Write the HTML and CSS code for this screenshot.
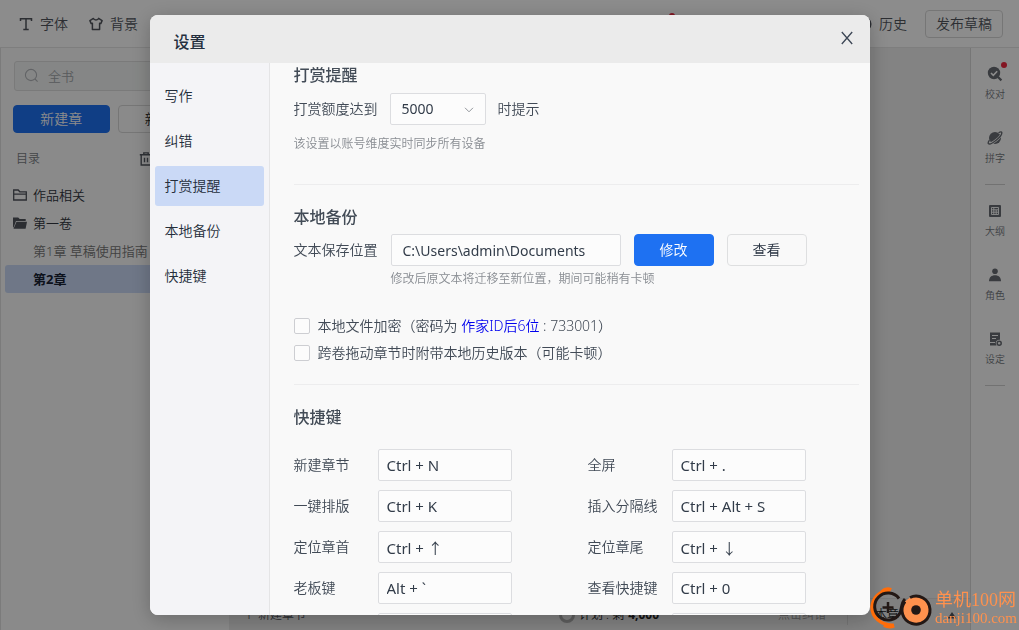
FILE: index.html
```html
<!DOCTYPE html>
<html lang="zh-CN">
<head>
<meta charset="utf-8">
<title>设置</title>
<meta name="viewport" content="width=device-width, initial-scale=1">
<link rel="stylesheet" href="styles.css">
</head>
<body>
<div class="app">
  <header class="topbar">
    <button class="tool" type="button">
      <svg width="14" height="14" viewBox="0 0 14 14" fill="none" stroke="currentColor" stroke-width="1.5"><path d="M1.500 4V1.700h11V4M7 1.700v10.500M4.300 12.400h5.400"/></svg>
      字体
    </button>
    <button class="tool" type="button">
      <svg width="14" height="14" viewBox="0 0 14 14" fill="none" stroke="currentColor" stroke-width="1.5" stroke-linejoin="round"><path d="M4.400 1.400.9 3.600l1.300 3 1.200-.4v6.400h7.200V6.200l1.200.4 1.300-3L9.600 1.400C9 3.400 5 3.400 4.400 1.400Z"/></svg>
      背景
    </button>
    <span class="topbar-mid"><i class="red-dot"></i></span>
    <button class="tool history" type="button">
      <svg width="14" height="14" viewBox="0 0 14 14" fill="none" stroke="currentColor" stroke-width="1.5"><circle cx="7" cy="7" r="5.8"/><path d="M7 3.5V7l2.3 1.5"/></svg>
      历史
    </button>
    <button class="publish" type="button">发布草稿</button>
  </header>
  <div class="workspace">
    <aside class="catalog">
      <label class="search">
        <svg width="16" height="16" viewBox="0 0 16 16" fill="none" stroke="currentColor" stroke-width="1.1"><circle cx="7" cy="7" r="5.6"/><path d="m11 11 2.6 2.6"/></svg>
        <input type="text" placeholder="全书" aria-label="搜索全书">
      </label>
      <div class="create">
        <button class="create-btn main" type="button">新建章</button>
        <button class="create-btn" type="button">新建卷</button>
      </div>
      <div class="catalog-head">
        <span>目录</span>
        <svg width="14" height="14" viewBox="0 0 14 14" fill="none" stroke="currentColor" stroke-width="1.4"><path d="M.8 2.8h12.4M4.8 2.5V.9h4.4v1.6M2.2 3v10h9.6V3M5.5 5.8v4.4M8.5 5.8v4.4"/></svg>
      </div>
      <ul class="tree">
        <li class="volume">
          <svg width="14" height="12" viewBox="0 0 14 12" fill="none" stroke="currentColor" stroke-width="1.3"><path d="M.7 11V1h4.5l1.6 1.800h6.500V11ZM.7 5.200h12.600"/></svg>
          作品相关
        </li>
        <li class="volume">
          <svg width="14" height="12" viewBox="0 0 14 12" fill="currentColor"><path d="M0 11V.4h5.200l1.500 1.700h6V4H3L1.200 9 0 11Z"/><path d="M3.500 4.700H14L12.600 11.800H.5Z"/></svg>
          第一卷
        </li>
        <li class="chapter">第1章 草稿使用指南</li>
        <li class="chapter current">第2章</li>
      </ul>
    </aside>
    <main class="editor">
      <div class="page"></div>
      <footer class="status">
        <button class="status-new" type="button">＋ 新建章节</button>
        <span class="plan"><i class="ring"></i>计划 : 剩 <b>4,000</b></span>
        <span class="fix">点击纠错</span>
        <span class="words">本章</span>
        <svg class="up" width="10" height="8" viewBox="0 0 10 8" fill="currentColor"><path d="M5 1 9.500 7.500h-9Z"/></svg>
      </footer>
    </main>
    <nav class="rail">
      <a class="rail-item" href="#proof">
        <svg width="16" height="16" viewBox="0 0 16 16"><circle cx="7" cy="7" r="6.2" fill="currentColor"/><path d="m11 11 3.4 3.4" stroke="currentColor" stroke-width="2.2"/><path d="m4 7 2.3 2.3 3.9-4" fill="none" stroke="#fff" stroke-width="1.6"/></svg>
        校对<i class="red-dot"></i>
      </a>
      <a class="rail-item short" href="#spell">
        <svg width="16" height="16" viewBox="0 0 16 16"><circle cx="8" cy="8" r="6" fill="currentColor"/><path d="M11.500 2.800c2-1.200 3.200-1.200 3.300-.2.200 1.600-2.200 4.800-5.400 7.400C6.200 12.700 2.600 14.600 1.500 13.700c-.7-.6-.2-1.900 1-3.500" fill="none" stroke="#fff" stroke-width="2.600"/><path d="M11.500 2.800c2-1.200 3.200-1.200 3.300-.2.200 1.600-2.200 4.800-5.400 7.400C6.200 12.700 2.600 14.600 1.500 13.700c-.7-.6-.2-1.900 1-3.500" fill="none" stroke="currentColor" stroke-width="1.400"/></svg>
        拼字
      </a>
      <a class="rail-item ruled" href="#outline">
        <svg width="16" height="16" viewBox="0 0 16 16"><rect x="2" y="2" width="12" height="12" rx="1" fill="currentColor"/><path d="M4.500 4.500h7v7h-7ZM6.800 4.500v7M4.500 6.800h7M4.500 9.200h7M9.200 6.800v4.700" fill="none" stroke="#fff" stroke-width=".9"/></svg>
        大纲
      </a>
      <a class="rail-item" href="#roles">
        <svg width="16" height="16" viewBox="0 0 16 16" fill="currentColor"><circle cx="8" cy="4.200" r="2.800"/><path d="M2 14.200c0-3.800 2.500-5.900 6-5.900s6 2.100 6 5.900Z"/></svg>
        角色
      </a>
      <a class="rail-item short" href="#setting">
        <svg width="16" height="16" viewBox="0 0 16 16"><path d="M3 1.500h10v7.300a3.500 3.500 0 0 0-3.500 5.700H3Z" fill="currentColor"/><path d="M5 4.500h6M5 7.500h4M3 11.500h5" stroke="#fff" stroke-width="1"/><circle cx="12.200" cy="12.200" r="2" fill="none" stroke="currentColor" stroke-width="1.500"/></svg>
        设定
      </a>
      <hr class="rail-end">
    </nav>
  </div>
</div>

<div class="overlay">
  <section class="modal" role="dialog" aria-labelledby="modal-title">
    <header class="modal-head">
      <h1 id="modal-title">设置</h1>
      <button class="close" type="button" aria-label="关闭">
        <svg width="14" height="14" viewBox="0 0 14 14" fill="none" stroke="currentColor" stroke-width="1.300"><path d="m1.800 1 10.400 12M12.200 1 1.800 13"/></svg>
      </button>
    </header>
    <div class="modal-body">
      <nav class="tabs">
        <a href="#write">写作</a>
        <a href="#correct">纠错</a>
        <a class="active" href="#reward">打赏提醒</a>
        <a href="#backup">本地备份</a>
        <a href="#keys">快捷键</a>
      </nav>
      <div class="panel">
        <section class="group reward" id="reward">
          <h2>打赏提醒</h2>
          <div class="row">
            <label for="amount">打赏额度达到</label>
            <span class="select">
              <select id="amount"><option>5000</option></select>
              <svg width="10" height="6" viewBox="0 0 10 6" fill="none" stroke="currentColor"><path d="m1 .8 4 4 4-4"/></svg>
            </span>
            <span>时提示</span>
          </div>
          <p class="hint">该设置以账号维度实时同步所有设备</p>
        </section>
        <section class="group backup" id="backup">
          <h2>本地备份</h2>
          <div class="row">
            <label for="path">文本保存位置</label>
            <input class="field path" id="path" type="text" value="C:\Users\admin\Documents">
            <button class="btn primary" type="button">修改</button>
            <button class="btn" type="button">查看</button>
          </div>
          <p class="hint indent">修改后原文本将迁移至新位置，期间可能稍有卡顿</p>
          <div class="checks">
            <label class="check"><input type="checkbox"><span>本地文件加密（密码为 <a href="#id">作家ID后6位</a> : 733001）</span></label>
            <label class="check"><input type="checkbox"><span>跨卷拖动章节时附带本地历史版本（可能卡顿）</span></label>
          </div>
        </section>
        <section class="group" id="keys">
          <h2>快捷键</h2>
          <div class="keys">
            <div class="key"><label for="k1">新建章节</label><input class="field" id="k1" value="Ctrl + N"></div>
            <div class="key"><label for="k2">全屏</label><input class="field" id="k2" value="Ctrl + ."></div>
            <div class="key"><label for="k3">一键排版</label><input class="field" id="k3" value="Ctrl + K"></div>
            <div class="key"><label for="k4">插入分隔线</label><input class="field" id="k4" value="Ctrl + Alt + S"></div>
            <div class="key"><label for="k5">定位章首</label><input class="field" id="k5" value="Ctrl + ↑"></div>
            <div class="key"><label for="k6">定位章尾</label><input class="field" id="k6" value="Ctrl + ↓"></div>
            <div class="key"><label for="k7">老板键</label><input class="field" id="k7" value="Alt + `"></div>
            <div class="key"><label for="k8">查看快捷键</label><input class="field" id="k8" value="Ctrl + 0"></div>
            <div class="key"><span></span><input class="field" aria-label="快捷键"></div>
            <div class="key"><span></span><input class="field" aria-label="快捷键"></div>
          </div>
        </section>
      </div>
    </div>
  </section>
</div>

<div class="brand">
  <svg width="64" height="42" viewBox="0 0 64 42" fill="none"><path d="M21 3.500C10 4 4 11 3 20c0 10 8 18 22 18.500" stroke="#ff6d0a" stroke-width="3.500"/><path d="M13 5c3-3 6-3.500 9-2M15 38c4 2 7 2 10 .500" stroke="#ff6d0a" stroke-width="4"/><path d="M30 11.500A13.500 13.500 0 1 0 31 26c2-5 1-10 5-14" stroke="#231815" stroke-width="3"/><path d="M19 15v11M13.500 20.500h11" stroke="#231815" stroke-width="2.500"/><path d="M41 10.500a14 14 0 1 1-5 4" fill="#ff914d" stroke="#231815" stroke-width="3"/><circle cx="47" cy="23" r="4.800" fill="#231815"/></svg>
  <div class="brand-text"><span class="brand-name">单机100网</span><span class="brand-site">danji100.com</span></div>
</div>
</body>
</html>
```
FILE: styles.css
```css
* { box-sizing: border-box; }
html, body { height: 100%; }
body {
  margin: 0;
  overflow: hidden;
  font: 350 14px/20px "Noto Sans", "Noto Sans CJK SC", sans-serif;
  color: #414a56;
  background: #fff;
}
button, input, select { font: inherit; color: inherit; }
button { padding: 0; border: 0; background: none; }
h1, h2, p, ul { margin: 0; padding: 0; }
ul { list-style: none; }
a { color: inherit; text-decoration: none; }
svg { flex: none; display: block; }

.app { height: 100%; display: flex; flex-direction: column; }
.topbar {
  flex: none;
  height: 48px;
  padding: 0 16px 0 19px;
  display: flex;
  align-items: center;
  gap: 18px;
  border-bottom: 1px solid #e6e6e6;
}
.tool { display: flex; align-items: center; gap: 7px; color: #50545c; }
.tool + .tool { margin-left: 3px; }
.topbar-mid { flex: 1; align-self: stretch; position: relative; }
.topbar-mid .red-dot { top: 13px; left: calc(100% - 171px); }
.red-dot {
  position: absolute;
  width: 6px;
  height: 6px;
  border-radius: 3px;
  background: #ee2840;
}
.publish { width: 78px; height: 28px; border: 1px solid #d8d8d8; border-radius: 4px; color: #50545c; }

.workspace { flex: 1; min-height: 0; display: flex; }
.catalog {
  flex: none;
  width: 229px;
  padding: 13px 5px 0 4px;
  border-left: 1px solid #e0e0e0;
  background: #fbfbfb;
}
.search {
  height: 30px;
  margin: 0 8px 0 9px;
  padding: 0 9px;
  display: flex;
  align-items: center;
  gap: 8px;
  border: 1px solid #dedede;
  border-radius: 3px;
  background: #f3f5f4;
  color: #b2b5ba;
}
.search input { flex: 1; min-width: 0; border: 0; padding: 0; background: none; font-size: 13px; }
.search input::placeholder { color: #a2a5aa; }
.create { display: flex; gap: 8px; margin: 14px 10px 0 8px; }
.create-btn { flex: 1; height: 28px; border: 1px solid #d8d8d8; border-radius: 4px; color: #222; }
.create-btn.main { border-color: #1e71f2; background: #1e71f2; color: #fff; }
.catalog-head {
  margin-top: 16px;
  padding: 0 71px 0 11px;
  display: flex;
  justify-content: space-between;
  align-items: center;
  font-size: 12px;
  color: #7b7f86;
}
.catalog-head svg { color: #555a62; }
.tree { margin-top: 12px; font-size: 13px; color: #32363e; }
.tree li { height: 28px; display: flex; align-items: center; white-space: nowrap; }
.volume { padding-left: 8px; gap: 6px; }
.volume svg { color: #50545c; }
.tree .chapter { padding-left: 28px; color: #777; }
.tree .current { border-radius: 3px; background: #cad9f6; color: #182234; font-weight: 700; }

.editor { flex: 1; min-width: 0; display: flex; flex-direction: column; background: #eee; }
.page { flex: 1; }
.status {
  height: 32px;
  padding: 0 10px 0 14px;
  display: grid;
  grid-template-columns: 315px 220px 69px 97px 1fr;
  align-items: center;
  border-top: 1px solid #ddd;
  background: #eaeaea;
  font-size: 12px;
  color: #50545c;
}
.status-new { text-align: left; }
.plan { display: flex; align-items: center; gap: 4px; color: #222; }
.ring { width: 16px; height: 16px; border: 3px solid #aaa; border-radius: 50%; margin-left: 1px; }
.fix { color: #999; }
.words { padding-left: 27px; border-left: 1px solid #d4d4d4; color: #222; }
.up { margin-left: 3px; }
.rail {
  flex: none;
  width: 49px;
  padding-top: 18px;
  border-left: 1px solid #d8d8d8;
  display: flex;
  flex-direction: column;
  align-items: center;
  background: #fcfcfc;
}
.rail-item {
  position: relative;
  height: 64px;
  display: flex;
  flex-direction: column;
  align-items: center;
  gap: 2px;
  font: 350 10px/20px "Noto Sans CJK SC", sans-serif;
  color: #74787e;
}
.rail-item svg { color: #686c73; }
.rail-item .red-dot { top: -4px; right: -2px; }
.rail-item.short { height: 54px; }
.rail-item.ruled { height: 83px; padding-top: 18px; border-top: 1px solid #d0d0d0; }
.rail-end { width: 20px; margin: 0; border: 0; border-top: 1px solid #d0d0d0; }

.overlay {
  position: fixed;
  inset: 0;
  padding: 15px;
  display: flex;
  justify-content: center;
  background: rgba(0, 0, 0, .45);
}
.modal {
  width: 100%;
  max-width: 720px;
  display: flex;
  flex-direction: column;
  overflow: hidden;
  border-radius: 8px;
  background: #f9f9f9;
  box-shadow: 0 4px 20px rgba(0, 0, 0, .24);
}
.modal-head {
  flex: none;
  height: 48px;
  padding: 6px 16px 0 24px;
  display: flex;
  align-items: center;
  justify-content: space-between;
  background: #ebebeb;
}
.modal-head h1 { font-size: 16px; line-height: 24px; font-weight: 500; color: #242f3e; }
.close { padding-bottom: 8px; color: #3c4655; }
.modal-body { flex: 1; min-height: 0; display: flex; }
.tabs {
  flex: none;
  width: 120px;
  padding: 13px 5px;
  display: flex;
  flex-direction: column;
  gap: 5px;
  border-right: 1px solid #e4e4e6;
  background: #f4f4f7;
}
.tabs a { padding: 10px; border-radius: 3px; color: #242e3b; }
.tabs .active { background: #cad9f6; }
.panel { flex: 1; min-width: 0; padding: 0 11px 0 24px; overflow: hidden; }
.group h2 { font-size: 16px; line-height: 24px; font-weight: 500; color: #434c57; }
.group + .group { padding-top: 20px; border-top: 1px solid #ededee; }
.reward { padding-bottom: 30px; }
.backup { padding-bottom: 21px; }
.row { display: flex; align-items: center; gap: 13px; margin-top: 5px; }
.reward .row { margin-top: 6px; gap: 12px; }
.hint { font-size: 12px; color: #888c92; margin-top: 9px; }
.hint.indent { margin: 3px 0 0 97px; }
.select { position: relative; width: 96px; }
.select select {
  width: 100%;
  height: 32px;
  padding: 0 11px;
  appearance: none;
  border: 1px solid #dcdde0;
  border-radius: 2px;
  background: #fcfcfc;
  color: #323c49;
  font-weight: 400;
}
.select svg { position: absolute; right: 12px; top: 14px; color: #92969c; pointer-events: none; }
.field {
  min-width: 0;
  height: 32px;
  padding: 0 8px;
  border: 1px solid #dcdde0;
  border-radius: 2px;
  background: #fcfcfc;
  color: #323c49;
  font-weight: 400;
}
.path { width: 230px; padding: 0 11px; }
.btn { width: 80px; height: 32px; border: 1px solid #dedfe0; border-radius: 4px; color: #242f3e; }
.btn.primary { border-color: #1e71f2; background: #1e71f2; color: #fff; }
.checks { display: grid; gap: 7px; margin-top: 27px; }
.check { display: flex; align-items: center; gap: 8px; }
.check a { color: #00e; }
.check input {
  appearance: none;
  flex: none;
  width: 16px;
  height: 16px;
  margin: 0;
  border: 1px solid #cdced2;
  border-radius: 2px;
  background: #fcfcfc;
}
.keys {
  margin-top: 20px;
  display: grid;
  grid-template-columns: 218px 218px;
  gap: 9px 76px;
}
.key { display: grid; grid-template-columns: 84px 134px; align-items: center; }
.key .field { font-size: 15px; }

.brand { position: fixed; right: 2px; bottom: 1px; display: flex; align-items: center; gap: 2px; }
.brand-text { display: flex; flex-direction: column; color: #ff914d; white-space: nowrap; }
.brand-name { font: 18px/20px "Liberation Serif", "Noto Sans CJK SC", serif; }
.brand-site { font: 15px/17px "Liberation Serif", serif; }
```
